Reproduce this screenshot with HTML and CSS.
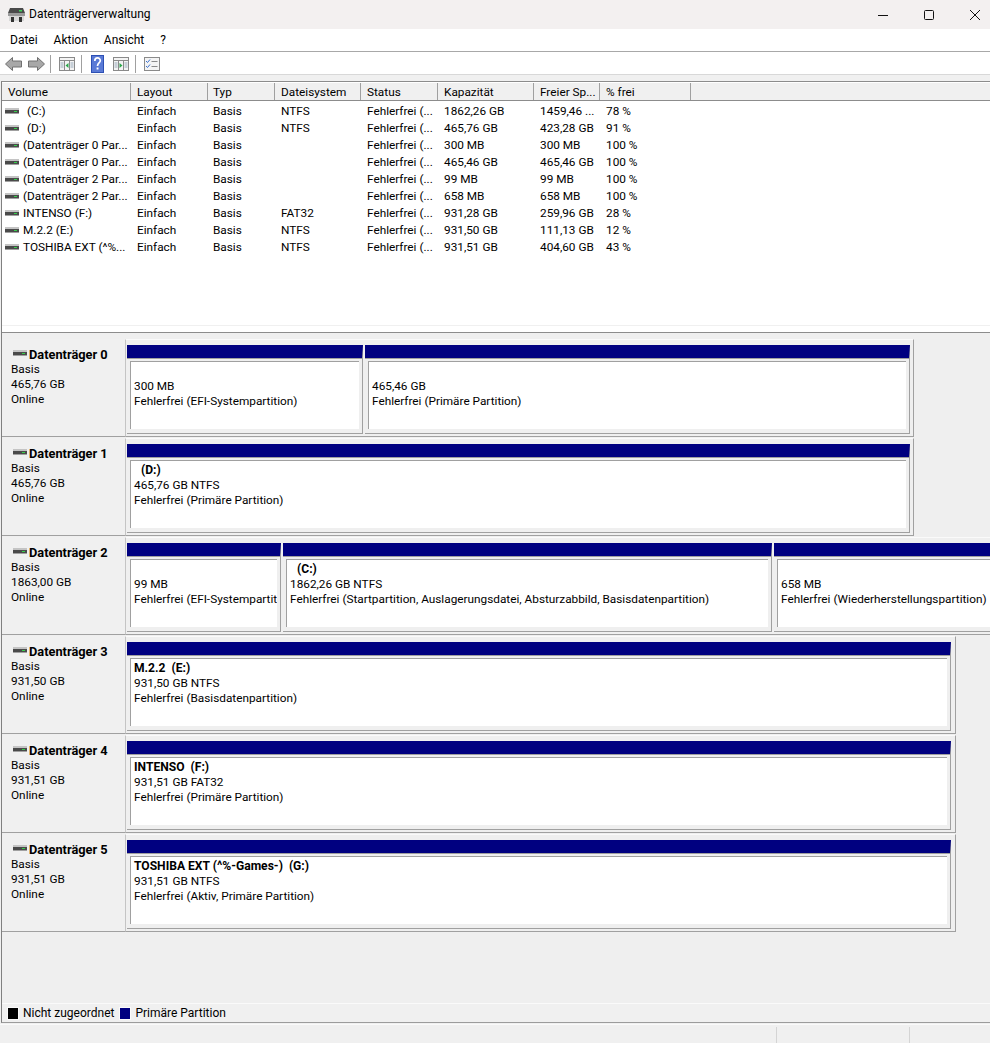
FILE: index.html
```html
<!DOCTYPE html>
<html lang="de">
<head>
<meta charset="utf-8">
<title>Datenträgerverwaltung</title>
<link rel="stylesheet" href="styles.css">
</head>
<body>
<svg class="defs" width="0" height="0" aria-hidden="true">
  <symbol id="disk" viewBox="0 0 14 8">
    <rect x="0" y="1" width="14" height="2" fill="#c4c4c4"/>
    <rect x="0" y="3" width="14" height="3" fill="#4a4a4a"/>
    <rect x="0" y="6" width="14" height="1" fill="#a0a0a0"/>
    <rect x="9" y="4" width="3" height="1" fill="#35d04a"/>
  </symbol>
</svg>
<div class="window">
  <header class="titlebar">
    <svg class="appicon" width="17" height="14" viewBox="0 0 17 14">
      <path d="M2 0h13l2 5H0z" fill="#4a4a4a"/>
      <rect x="11" y="2" width="3" height="1.5" fill="#3fd35a"/>
      <rect x="0" y="5" width="17" height="3" fill="#9a9a9a"/>
      <path d="M1 8h15v5H1z" fill="#d8d8d8"/>
      <rect x="3" y="9" width="3" height="5" fill="#333"/>
      <rect x="11" y="9" width="3" height="5" fill="#333"/>
    </svg>
    <span class="title">Datenträgerverwaltung</span>
    <div class="controls">
      <svg width="12" height="12" viewBox="0 0 12 12"><path d="M1 6.5h10" stroke="#111" fill="none"/></svg>
      <svg width="12" height="12" viewBox="0 0 12 12"><rect x="1.5" y="1.5" width="9" height="9" rx="1" stroke="#111" fill="none"/></svg>
      <svg width="12" height="12" viewBox="0 0 12 12"><path d="M1 1l10 10M11 1L1 11" stroke="#111" fill="none"/></svg>
    </div>
  </header>
  <nav class="menubar">
    <span>Datei</span><span>Aktion</span><span>Ansicht</span><span>?</span>
  </nav>
  <div class="toolbar">
    <svg class="tool" width="17" height="14" viewBox="0 0 17 14"><path d="M7.5 .5L.5 7l7 6.5V10h9V4h-9z" fill="#a8a8a8" stroke="#707070"/></svg>
    <svg class="tool fwd" width="17" height="14" viewBox="0 0 17 14"><path d="M9.500 .5l7 6.500-7 6.500V10h-9V4h9z" fill="#a8a8a8" stroke="#707070"/></svg>
    <i class="sep first"></i>
    <svg class="tool" width="16" height="14" viewBox="0 0 16 14"><rect x=".5" y=".5" width="15" height="13" fill="#f4f4f4" stroke="#8a8a8a"/><path d="M0 3.500h16M5.500 4v10M10.500 4v10" stroke="#8a8a8a" fill="none"/><path d="M1.500 6h3M1.500 8h3M1.500 10h3M11.500 6h3M11.500 8h3M11.500 10h3" stroke="#9ab" fill="none"/><path d="M9.500 6v5L6.500 8.500z" fill="#2aa84a"/></svg>
    <i class="sep"></i>
    <svg class="tool help" width="13" height="18" viewBox="0 0 13 18"><rect width="13" height="18" fill="#2d50b4"/><rect x="1" y="1" width="11" height="16" fill="#5a7ad6"/><path d="M3.800 6c0-4 5.500-4 5.500-.5 0 2.500-2.800 2.500-2.800 5.500" stroke="#fff" stroke-width="1.700" fill="none"/><rect x="5.600" y="12.500" width="1.900" height="2" fill="#fff"/></svg>
    <svg class="tool next" width="16" height="14" viewBox="0 0 16 14"><rect x=".5" y=".5" width="15" height="13" fill="#f4f4f4" stroke="#8a8a8a"/><path d="M0 3.500h16M5.500 4v10M10.500 4v10" stroke="#8a8a8a" fill="none"/><path d="M1.500 6h3M1.500 8h3M1.500 10h3M11.500 6h3M11.500 8h3M11.500 10h3" stroke="#9ab" fill="none"/><path d="M6.500 6v5l3-2.500z" fill="#2aa84a"/></svg>
    <i class="sep"></i>
    <svg class="tool" width="16" height="14" viewBox="0 0 16 14"><rect x=".5" y=".5" width="15" height="13" fill="#f4f4f4" stroke="#8a8a8a"/><path d="M2 4l1.500 1.500L6 2.500M2 9l1.500 1.500L6 7.500" stroke="#3a70d0" fill="none"/><path d="M7.500 4.500h6M7.500 9.500h6" stroke="#8a8a8a" fill="none"/></svg>
  </div>
  <main class="main">
    <section class="list">
      <div class="cols head">
        <span>Volume</span><span>Layout</span><span class="typ">Typ</span><span>Dateisystem</span><span>Status</span><span>Kapazität</span><span>Freier Sp...</span><span>% frei</span><span></span>
      </div>
      <div class="cols row"><span class="vol"><svg class="hd"><use href="#disk"/></svg><b class="sp">(C:)</b></span><span>Einfach</span><span class="typ">Basis</span><span>NTFS</span><span>Fehlerfrei (...</span><span>1862,26 GB</span><span>1459,46 ...</span><span>78 %</span></div>
      <div class="cols row"><span class="vol"><svg class="hd"><use href="#disk"/></svg><b class="sp">(D:)</b></span><span>Einfach</span><span class="typ">Basis</span><span>NTFS</span><span>Fehlerfrei (...</span><span>465,76 GB</span><span>423,28 GB</span><span>91 %</span></div>
      <div class="cols row"><span class="vol"><svg class="hd"><use href="#disk"/></svg><b>(Datenträger 0 Par...</b></span><span>Einfach</span><span class="typ">Basis</span><span></span><span>Fehlerfrei (...</span><span>300 MB</span><span>300 MB</span><span>100 %</span></div>
      <div class="cols row"><span class="vol"><svg class="hd"><use href="#disk"/></svg><b>(Datenträger 0 Par...</b></span><span>Einfach</span><span class="typ">Basis</span><span></span><span>Fehlerfrei (...</span><span>465,46 GB</span><span>465,46 GB</span><span>100 %</span></div>
      <div class="cols row"><span class="vol"><svg class="hd"><use href="#disk"/></svg><b>(Datenträger 2 Par...</b></span><span>Einfach</span><span class="typ">Basis</span><span></span><span>Fehlerfrei (...</span><span>99 MB</span><span>99 MB</span><span>100 %</span></div>
      <div class="cols row"><span class="vol"><svg class="hd"><use href="#disk"/></svg><b>(Datenträger 2 Par...</b></span><span>Einfach</span><span class="typ">Basis</span><span></span><span>Fehlerfrei (...</span><span>658 MB</span><span>658 MB</span><span>100 %</span></div>
      <div class="cols row"><span class="vol"><svg class="hd"><use href="#disk"/></svg><b>INTENSO (F:)</b></span><span>Einfach</span><span class="typ">Basis</span><span>FAT32</span><span>Fehlerfrei (...</span><span>931,28 GB</span><span>259,96 GB</span><span>28 %</span></div>
      <div class="cols row"><span class="vol"><svg class="hd"><use href="#disk"/></svg><b>M.2.2 (E:)</b></span><span>Einfach</span><span class="typ">Basis</span><span>NTFS</span><span>Fehlerfrei (...</span><span>931,50 GB</span><span>111,13 GB</span><span>12 %</span></div>
      <div class="cols row"><span class="vol"><svg class="hd"><use href="#disk"/></svg><b>TOSHIBA EXT (^%...</b></span><span>Einfach</span><span class="typ">Basis</span><span>NTFS</span><span>Fehlerfrei (...</span><span>931,51 GB</span><span>404,60 GB</span><span>43 %</span></div>
    </section>
    <div class="splitter"></div>
    <section class="disks">
      <div class="disk">
        <div class="label"><strong><svg class="hd"><use href="#disk"/></svg>Datenträger 0</strong><span>Basis</span><span>465,76 GB</span><span>Online</span></div>
        <div class="vols w-a">
          <div class="part p-236"><div class="box"><span>&nbsp;</span><span>300 MB</span><span>Fehlerfrei (EFI-Systempartition)</span></div></div>
          <div class="part p-545"><div class="box"><span>&nbsp;</span><span>465,46 GB</span><span>Fehlerfrei (Primäre Partition)</span></div></div>
        </div>
      </div>
      <div class="disk">
        <div class="label"><strong><svg class="hd"><use href="#disk"/></svg>Datenträger 1</strong><span>Basis</span><span>465,76 GB</span><span>Online</span></div>
        <div class="vols w-a">
          <div class="part p-783"><div class="box"><strong class="ind">(D:)</strong><span>465,76 GB NTFS</span><span>Fehlerfrei (Primäre Partition)</span></div></div>
        </div>
      </div>
      <div class="disk">
        <div class="label"><strong><svg class="hd"><use href="#disk"/></svg>Datenträger 2</strong><span>Basis</span><span>1863,00 GB</span><span>Online</span></div>
        <div class="vols w-b">
          <div class="part p-154"><div class="box"><span>&nbsp;</span><span>99 MB</span><span>Fehlerfrei (EFI-Systempartition)</span></div></div>
          <div class="part p-489"><div class="box"><strong class="ind">(C:)</strong><span>1862,26 GB NTFS</span><span>Fehlerfrei (Startpartition, Auslagerungsdatei, Absturzabbild, Basisdatenpartition)</span></div></div>
          <div class="part p-260"><div class="box"><span>&nbsp;</span><span>658 MB</span><span>Fehlerfrei (Wiederherstellungspartition)</span></div></div>
        </div>
      </div>
      <div class="disk">
        <div class="label"><strong><svg class="hd"><use href="#disk"/></svg>Datenträger 3</strong><span>Basis</span><span>931,50 GB</span><span>Online</span></div>
        <div class="vols w-c">
          <div class="part p-824"><div class="box"><strong>M.2.2&nbsp; (E:)</strong><span>931,50 GB NTFS</span><span>Fehlerfrei (Basisdatenpartition)</span></div></div>
        </div>
      </div>
      <div class="disk">
        <div class="label"><strong><svg class="hd"><use href="#disk"/></svg>Datenträger 4</strong><span>Basis</span><span>931,51 GB</span><span>Online</span></div>
        <div class="vols w-c">
          <div class="part p-824"><div class="box"><strong>INTENSO&nbsp; (F:)</strong><span>931,51 GB FAT32</span><span>Fehlerfrei (Primäre Partition)</span></div></div>
        </div>
      </div>
      <div class="disk">
        <div class="label"><strong><svg class="hd"><use href="#disk"/></svg>Datenträger 5</strong><span>Basis</span><span>931,51 GB</span><span>Online</span></div>
        <div class="vols w-c">
          <div class="part p-824"><div class="box"><strong>TOSHIBA EXT (^%-Games-)&nbsp; (G:)</strong><span>931,51 GB NTFS</span><span>Fehlerfrei (Aktiv, Primäre Partition)</span></div></div>
        </div>
      </div>
    </section>
    <footer class="legend">
      <i class="swatch black"></i><span>Nicht zugeordnet</span>
      <i class="swatch navy"></i><span>Primäre Partition</span>
    </footer>
  </main>
  <div class="status"><span class="s1"></span><span class="s2"></span><span class="s3"></span></div>
</div>
</body>
</html>
```

FILE: styles.css
```css
* { box-sizing: border-box; }
html, body { margin: 0; padding: 0; }
body {
  width: 990px;
  height: 1043px;
  overflow: hidden;
  background: #f0f0f0;
  font-family: Roboto, "Noto Sans", sans-serif;
  font-size: 11.8px;
  line-height: 15px;
  color: #000;
}
.defs { position: absolute; }
.window { display: flex; flex-direction: column; height: 1043px; }

.titlebar {
  height: 29px;
  background: #f3f0f0;
  display: flex;
  align-items: center;
  padding-left: 8px;
}
.appicon { margin-right: 4px; }
.title { font-size: 12px; }
.controls { margin-left: auto; display: flex; align-items: center; gap: 34px; padding-right: 9px; }

.menubar {
  height: 23px;
  background: #fff;
  border-bottom: 1px solid #a8a8a8;
  display: flex;
  align-items: center;
  padding: 1px 0 0 10px;
  gap: 16px;
  font-size: 12px;
}

.toolbar {
  height: 23px;
  background: #fff;
  border-bottom: 1px solid #d8d8d8;
  display: flex;
  align-items: center;
  padding: 2px 0 0 5px;
}
.tool { flex: none; }
.fwd { margin-left: 6px; }
.sep { width: 1px; height: 18px; background: #a0a0a0; margin: 0 8px 0 6px; }
.sep.first { margin-left: 5px; }
.help { margin-left: 1px; }
.next { margin-left: 9px; }

.main {
  margin-top: 6px;
  margin-left: 1px;
  border-left: 1px solid #808080;
  border-top: 1px solid #8c8c8c;
  display: flex;
  flex-direction: column;
  height: 942px;
  border-bottom: 1px solid #9c9c9c;
}

.list {
  height: 244px;
  background: #fff;
  border-bottom: 1px solid #f0f0f0;
  flex: none;
  padding-top: 1px;
}
.cols {
  display: grid;
  grid-template-columns: 129px 77px 67px 86px 77px 96px 66px 91px 1fr;
}
.cols > span { padding-left: 6px; white-space: nowrap; overflow: hidden; }
.cols > .typ { padding-left: 5px; }
.head {
  height: 18px;
  background: #f0f0f0;
  border-bottom: 1px solid #8c8c8c;
  margin-bottom: 1px;
  line-height: 17px;
}
.head > span { border-right: 1px solid #a0a0a0; padding-top: 1px; }
.head > span:last-child { border-right: 0; }
.row { height: 17px; line-height: 16px; }
.row > span { padding-top: 1px; }
.cols > .vol { padding-left: 3px; padding-top: 0; display: flex; align-items: center; }
.vol b { font-weight: 400; margin-left: 4px; padding-top: 1px; }
.vol b.sp { margin-left: 8px; }
.hd { width: 14px; height: 8px; flex: none; }

.splitter { height: 7px; background: #fff; border-bottom: 1px solid #8c8c8c; flex: none; }

.disks { flex: 1; background: #efefef; padding-top: 6px; overflow: hidden; }
.disk { display: flex; height: 99px; }
.label {
  width: 123px;
  height: 98px;
  flex: none;
  background: #f0f0f0;
  border-bottom: 1px solid #a0a0a0;
  display: flex;
  flex-direction: column;
  padding: 8px 0 0 9px;
}
.label strong { display: flex; align-items: center; font-weight: 700; font-size: 12.8px; }
.label strong .hd { margin: 0 2px 3px 2px; }
.vols {
  height: 98px;
  flex: none;
  display: flex;
  gap: 2px;
  background: #efefef;
  border-left: 1px solid #c4c4c4;
  border-top: 1px solid #fafafa;
  border-bottom: 1px solid #a0a0a0;
  border-right: 1px solid #a0a0a0;
  padding: 5px 0 0 1px;
}
.w-a { width: 789px; }
.w-b { width: 900px; border-right: 0; }
.w-c { width: 831px; }
.part {
  flex: none;
  height: 89px;
  border-top: 13px solid #000080;
  border-bottom: 1px solid #a0a0a0;
  border-right: 1px solid #a0a0a0;
  padding: 3px;
  background: #efefef;
}
.part::before {
  content: "";
  display: block;
  height: 1px;
  margin: -3px -3px 2px;
  background: #a0a0a0;
}
.p-236 { width: 236px; }
.p-545 { width: 545px; }
.p-783 { width: 783px; }
.p-154 { width: 154px; }
.p-489 { width: 489px; }
.p-260 { width: 260px; }
.p-824 { width: 824px; }
.box {
  height: 68px;
  background: #fff;
  border-left: 1px solid #a0a0a0;
  border-top: 1px solid #a0a0a0;
  padding: 2px 0 0 3px;
  display: flex;
  flex-direction: column;
  overflow: hidden;
  white-space: nowrap;
}
.box strong { font-weight: 700; font-size: 12.1px; }
.ind { padding-left: 7px; }

.legend {
  flex: none;
  height: 19px;
  background: #f0f0f0;
  border-top: 1px solid #fafafa;
  display: flex;
  align-items: center;
  padding-left: 5px;
  font-size: 12px;
}
.swatch { width: 12px; height: 13px; border: 1px solid #fafafa; margin-right: 4px; }
.black { background: #000; }
.navy { background: #000080; margin-left: 5px; }

.status {
  flex: 1;
  display: grid;
  grid-template-columns: 776px 133px 1fr;
  border-top: 1px solid #fafafa;
  margin-top: 1px;
  padding-top: 2px;
}
.s2, .s3 { border-left: 1px solid #d4d4d4; }
```
